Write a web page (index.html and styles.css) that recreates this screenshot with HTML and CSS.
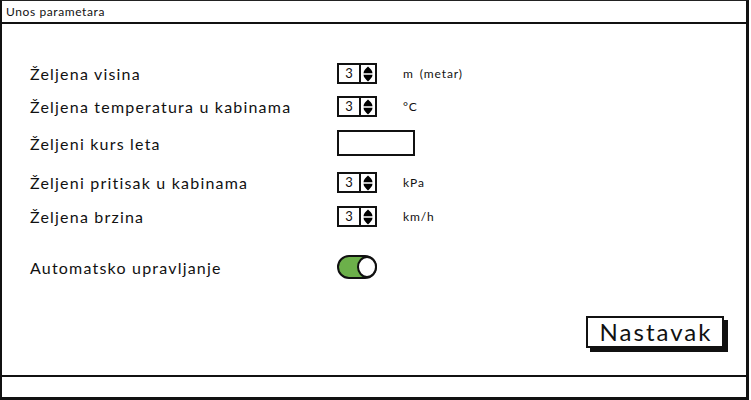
FILE: index.html
```html
<!DOCTYPE html>
<html>
<head>
<meta charset="utf-8">
<link rel="stylesheet" href="styles.css">
</head>
<body>
<div class="window">
  <div class="titlebar">Unos parametara</div>
  <div class="content">
    <div class="form">
      <div class="row r1">
        <div class="label">Željena visina</div>
        <div class="spinner"><span class="val">3</span><span class="arrows"><svg width="10" height="16" viewBox="0 0 10 16"><path d="M5 0.5 C7 2.5 9.5 4.5 9.5 7.2 H0.5 C0.5 4.5 3 2.5 5 0.5Z M0.5 8.8 H9.5 C9.5 11.5 7 13.5 5 15.5 C3 13.5 0.5 11.5 0.5 8.8Z" fill="#000"/></svg></span></div>
        <div class="unit">m (metar)</div>
      </div>
      <div class="row r2">
        <div class="label">Željena temperatura u kabinama</div>
        <div class="spinner"><span class="val">3</span><span class="arrows"><svg width="10" height="16" viewBox="0 0 10 16"><path d="M5 0.5 C7 2.5 9.5 4.5 9.5 7.2 H0.5 C0.5 4.5 3 2.5 5 0.5Z M0.5 8.8 H9.5 C9.5 11.5 7 13.5 5 15.5 C3 13.5 0.5 11.5 0.5 8.8Z" fill="#000"/></svg></span></div>
        <div class="unit">°C</div>
      </div>
      <div class="row r3">
        <div class="label">Željeni kurs leta</div>
        <div class="textfield"></div>
        <div class="unit"></div>
      </div>
      <div class="row r4">
        <div class="label">Željeni pritisak u kabinama</div>
        <div class="spinner"><span class="val">3</span><span class="arrows"><svg width="10" height="16" viewBox="0 0 10 16"><path d="M5 0.5 C7 2.5 9.5 4.5 9.5 7.2 H0.5 C0.5 4.5 3 2.5 5 0.5Z M0.5 8.8 H9.5 C9.5 11.5 7 13.5 5 15.5 C3 13.5 0.5 11.5 0.5 8.8Z" fill="#000"/></svg></span></div>
        <div class="unit">kPa</div>
      </div>
      <div class="row r5">
        <div class="label">Željena brzina</div>
        <div class="spinner"><span class="val">3</span><span class="arrows"><svg width="10" height="16" viewBox="0 0 10 16"><path d="M5 0.5 C7 2.5 9.5 4.5 9.5 7.2 H0.5 C0.5 4.5 3 2.5 5 0.5Z M0.5 8.8 H9.5 C9.5 11.5 7 13.5 5 15.5 C3 13.5 0.5 11.5 0.5 8.8Z" fill="#000"/></svg></span></div>
        <div class="unit">km/h</div>
      </div>
      <div class="row r6">
        <div class="label">Automatsko upravljanje</div>
        <div class="toggle"><span class="knob"></span></div>
        <div class="unit"></div>
      </div>
    </div>
    <div class="actions">
      <button class="btn">Nastavak</button>
    </div>
  </div>
  <div class="statusbar"></div>
</div>
</body>
</html>
```

FILE: styles.css
```css
* { box-sizing: border-box; }
html, body { margin: 0; padding: 0; background: #fff; }
body {
  font-family: "Lato", "Open Sans", "Liberation Sans", sans-serif;
  color: #111;
  width: 751px;
  height: 400px;
}
.window {
  width: 749px;
  height: 400px;
  border-top: 1px solid #222;
  border-left: 2px solid #111;
  border-right: 3px solid #111;
  border-bottom: 3px solid #111;
  display: flex;
  flex-direction: column;
}
.titlebar {
  height: 23px;
  border-bottom: 2px solid #111;
  font-size: 12px;
  line-height: 21px;
  padding-left: 4px;
  letter-spacing: 0.6px;
}
.content {
  flex: 1;
  display: flex;
  flex-direction: column;
}
.form {
  padding-left: 28px;
  padding-top: 39px;
  display: flex;
  flex-direction: column;
}
.row {
  display: grid;
  grid-template-columns: 307px 66px 1fr;
  align-items: center;
}
.r1 { height: 20px; }
.r2 { height: 20px; margin-top: 13px; }
.r3 { height: 26px; margin-top: 14px; }
.r4 { height: 20px; margin-top: 16px; }
.r5 { height: 20px; margin-top: 14px; }
.r6 { height: 24px; margin-top: 29px; }
.label {
  font-size: 16px;
  letter-spacing: 1.2px;
}
.unit {
  font-size: 12px;
  letter-spacing: 0.9px;
  word-spacing: 2px;
}
.spinner {
  width: 40px;
  height: 21px;
  border: 2px solid #111;
  display: flex;
  background: #fff;
}
.spinner .val {
  width: 22px;
  border-right: 2px solid #111;
  font-size: 13px;
  text-align: center;
  line-height: 17px;
}
.spinner .arrows {
  flex: 1;
  display: flex;
  align-items: center;
  justify-content: center;
}
.textfield {
  width: 78px;
  height: 26px;
  border: 2px solid #111;
  background: #fff;
}
.toggle {
  width: 40px;
  height: 24px;
  border: 2px solid #111;
  border-radius: 12px;
  background: #6cb04a;
  display: flex;
  justify-content: flex-end;
  align-items: center;
}
.toggle .knob {
  width: 20px;
  height: 22px;
  border-radius: 50%;
  background: #fff;
  border: 2px solid #111;
  margin-right: -2px;
}
.actions {
  margin-top: auto;
  display: flex;
  justify-content: flex-end;
  padding-right: 22px;
  padding-bottom: 27px;
}
.btn {
  font-family: "Lato", "Open Sans", "Liberation Sans", sans-serif;
  font-size: 24px;
  color: #111;
  background: #fff;
  border: 2px solid #111;
  box-shadow: 4px 4px 0 #111;
  width: 138px;
  height: 32px;
  padding: 0 0 0 2px;
  line-height: 28px;
  letter-spacing: 2px;
}
.statusbar {
  height: 22px;
  border-top: 2px solid #111;
}
```
